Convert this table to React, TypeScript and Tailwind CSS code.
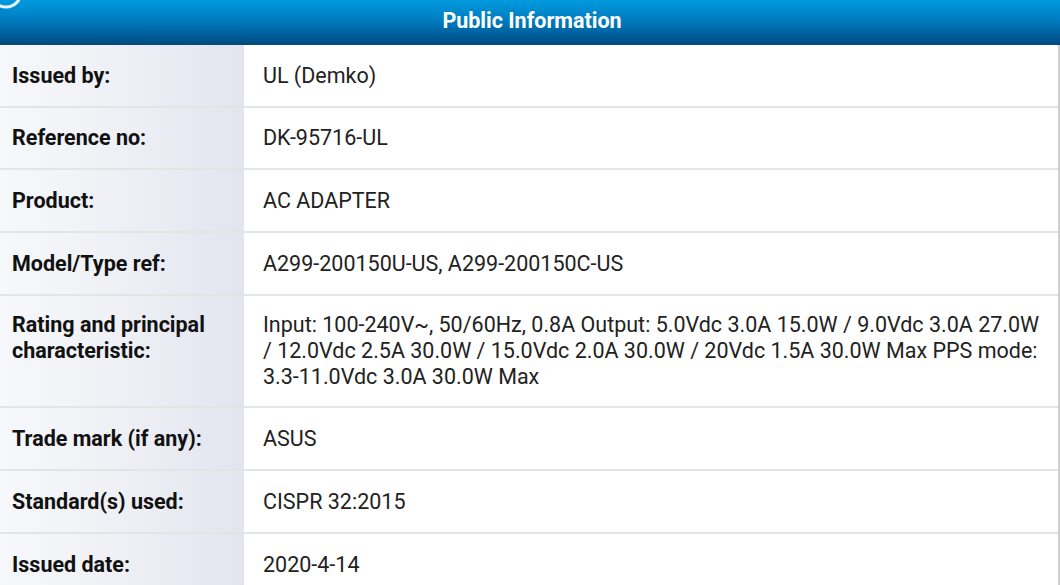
import React from "react";

const rows: { label: React.ReactNode; value: string; h: string; top?: boolean }[] = [
  { label: "Issued by:", value: "UL (Demko)", h: "h-[63px]" },
  { label: "Reference no:", value: "DK-95716-UL", h: "h-[62px]" },
  { label: "Product:", value: "AC ADAPTER", h: "h-[63px]" },
  { label: "Model/Type ref:", value: "A299-200150U-US, A299-200150C-US", h: "h-[63px]" },
  {
    label: (
      <>
        Rating and principal
        <br />
        characteristic:
      </>
    ),
    value:
      "Input: 100-240V~, 50/60Hz, 0.8A Output: 5.0Vdc 3.0A 15.0W / 9.0Vdc 3.0A 27.0W / 12.0Vdc 2.5A 30.0W / 15.0Vdc 2.0A 30.0W / 20Vdc 1.5A 30.0W Max PPS mode: 3.3-11.0Vdc 3.0A 30.0W Max",
    h: "h-[112px]",
    top: true,
  },
  { label: "Trade mark (if any):", value: "ASUS", h: "h-[63px]" },
  { label: "Standard(s) used:", value: "CISPR 32:2015", h: "h-[63px]" },
  { label: "Issued date:", value: "2020-4-14", h: "h-[63px]" },
];

export default function App() {
  return (
    <div
      className="w-[1060px] h-[585px] overflow-hidden bg-white relative"
      style={{ fontFamily: "Roboto, 'Liberation Sans', sans-serif" }}
    >
      <div className="h-[45px] bg-gradient-to-b from-[#009ade] via-[#0079bd] to-[#004b82] border-b border-[#0a4a78] flex items-center justify-center relative">
        <svg className="absolute left-0 top-0" width="40" height="20" viewBox="0 0 40 20">
          <circle cx="6" cy="-8" r="15" fill="none" stroke="#ffffff" strokeWidth="3" opacity="0.9" />
        </svg>
        <span className="text-white font-bold text-[21.5px] leading-[26px] pl-[4px] pb-[3px]">Public Information</span>
      </div>
      <div className="flex flex-col border-r-2 border-[#cfcfcf]">
        {rows.map((r, i) => (
          <div key={i} className={`flex ${r.h} border-b-2 border-[#e4e4e4]`}>
            <div
              className={
                r.top
                  ? "w-[244px] shrink-0 bg-gradient-to-r from-[#f7f8fb] via-[#eef0f5] to-[#e2e5ef] flex items-start pt-[16px] pl-[12px] text-[21.5px] leading-[26px] font-bold text-[#111]"
                  : "w-[244px] shrink-0 bg-gradient-to-r from-[#f7f8fb] via-[#eef0f5] to-[#e2e5ef] flex items-center pl-[12px] text-[21.5px] leading-[26px] font-bold text-[#111]"
              }
            >
              <div>{r.label}</div>
            </div>
            <div className="flex-1 flex items-center pl-[19px] pr-[14px] text-[21.5px] leading-[26px] text-[#222]">
              <div>{r.value}</div>
            </div>
          </div>
        ))}
      </div>
    </div>
  );
}
